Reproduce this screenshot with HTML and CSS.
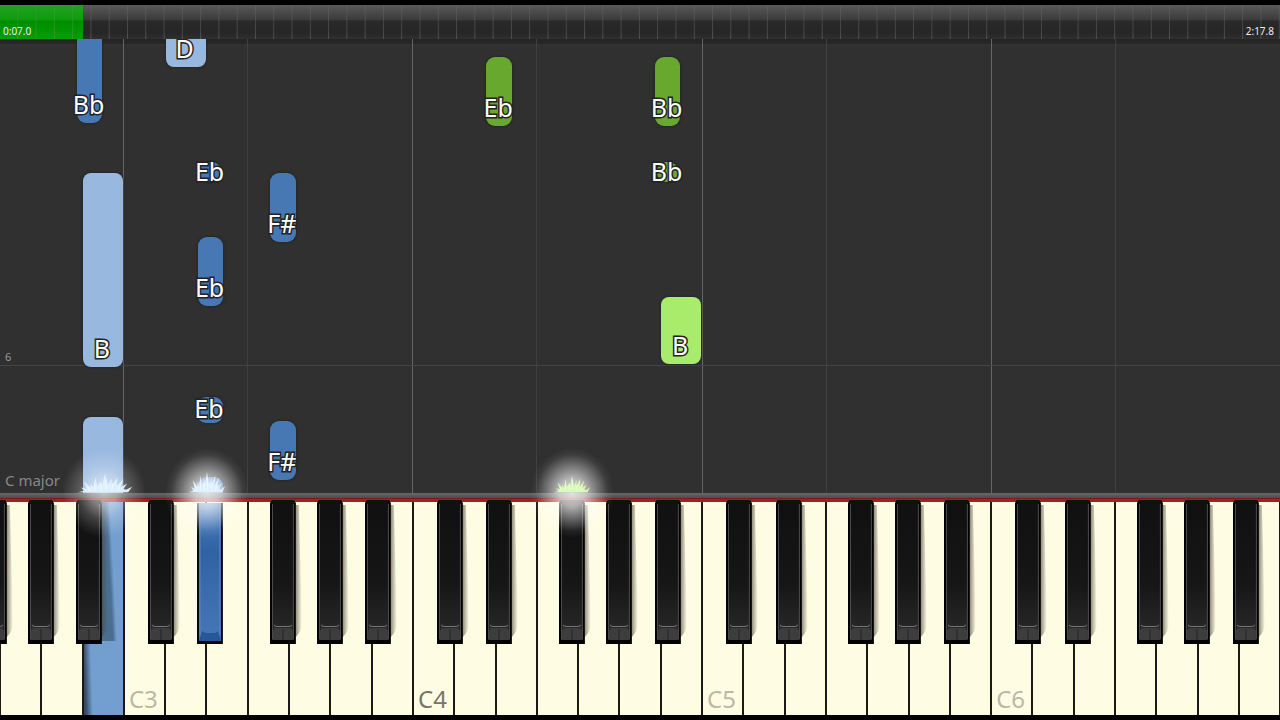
FILE: index.html
```
<!DOCTYPE html>
<html lang="en">
<head>
<meta charset="utf-8">
<meta name="viewport" content="width=device-width, initial-scale=1">
<title>Piano roll</title>
<link rel="stylesheet" href="styles.css">
</head>
<body>
<svg class="defs" aria-hidden="true">
  <defs>
    <linearGradient id="ebony" x1="0" y1="0" x2="0" y2="1"><stop offset="0" stop-color="#101010"/><stop offset=".6" stop-color="#161616"/><stop offset="1" stop-color="#2b2b2b"/></linearGradient>
    <linearGradient id="azure" x1="0" y1="0" x2="0" y2="1"><stop offset="0" stop-color="#4f80bd"/><stop offset=".35" stop-color="#3062a4"/><stop offset="1" stop-color="#4877b8"/></linearGradient>
    <linearGradient id="shade" x1="0" y1="0" x2="1" y2="0"><stop offset="0" stop-color="#4a473d" stop-opacity=".6"/><stop offset="1" stop-color="#4a473d" stop-opacity="0"/></linearGradient>
    <symbol id="black-key" viewBox="0 0 34 145" preserveAspectRatio="none">
      <path d="M26 6L29 6L32 124Q32 132 26 138Z" fill="url(#shade)"/>
      <path d="M0 4L2 1H24L26 4V145H0Z" fill="#000"/>
      <path d="M2 1H24V141H2Z" fill="url(#ebony)"/>
      <path d="M2.500 5V140M23.500 5V140" stroke="#4c4c4c" fill="none"/>
      <path d="M4 126L6 129H20L22 126V141H4Z" fill="#303030"/>
      <path d="M3 141V132Q4 129 8 129H18Q22 129 23 132V141Z" fill="#3d3d3d"/>
      <path d="M4 126Q6 128 8 127.500H18Q20 128 22 126" stroke="#777" fill="none"/>
      <path d="M13 130V141" stroke="#242424"/>
    </symbol>
    <symbol id="blue-key" viewBox="0 0 34 145" preserveAspectRatio="none">
      <path d="M0 4H26V145H0Z" fill="#050608"/>
      <path d="M2 4H24V142H2Z" fill="url(#azure)"/>
      <path d="M3 5V136M23 5V136" stroke="#5d8ac4" fill="none"/>
      <path d="M2 142L5 132Q7 134 10 134H17Q20 134 21 132L24 142Z" fill="#285798"/>
    </symbol>
    <symbol id="spark" viewBox="0 0 56 24" preserveAspectRatio="none">
      <path d="M0 23L7 21L3 17L9 19L6 9L13 17L13 11L16 17L18 4L20 15L24 9L25 14L28 0L31 14L35 6L35 14L41 4L40 15L47 6L44 17L51 12L47 19L50 20L56 16L52 23Z" fill="currentColor"/>
      <path d="M12 22L10 16M18 21L17 12M24 21V13M29 20V7M35 21L36 12M41 21L44 14" stroke="#fff" opacity=".7"/>
    </symbol>
  </defs>
</svg>
<main class="player">
  <div class="timeline" role="progressbar" aria-valuemin="0" aria-valuemax="138" aria-valuenow="7" aria-label="Song position">
    <div class="played" style="width:6.5%"></div>
    <span class="time">0:07.0</span>
    <span class="time">2:17.8</span>
  </div>

  <section class="roll">
    <div class="lanes"><i class="lane first"></i><i class="lane octave"></i><i class="lane four"></i><i class="lane octave"></i><i class="lane four"></i><i class="lane octave"></i><i class="lane four"></i><i class="lane octave"></i><i class="lane four"></i></div>
    <div class="measure"><span class="measure-number">6</span></div>
    <span class="signature">C major</span>

    <div class="note sharp left-hand" style="left:6%;bottom:370px;height:100px"><span>Bb</span></div>
    <div class="note natural left-hand" style="left:12.95%;bottom:426px;height:60px"><span>D</span></div>
    <div class="note sharp right-hand" style="left:38%;bottom:367px;height:69px"><span>Eb</span></div>
    <div class="note sharp right-hand" style="left:51.15%;bottom:367px;height:69px"><span>Bb</span></div>
    <div class="note sharp left-hand short" style="left:15.4%;bottom:311px;height:20px"><span>Eb</span></div>
    <div class="note sharp right-hand short" style="left:51.1%;bottom:311px;height:20px"><span>Bb</span></div>
    <div class="note natural left-hand" style="left:6.48%;bottom:126px;height:194px"><span>B</span></div>
    <div class="note sharp left-hand" style="left:21.1%;bottom:251px;height:69px"><span>F#</span></div>
    <div class="note sharp left-hand" style="left:15.45%;bottom:187px;height:69px"><span>Eb</span></div>
    <div class="note natural right-hand" style="left:51.65%;bottom:129px;height:67px"><span>B</span></div>
    <div class="note sharp left-hand brief" style="left:15.4%;bottom:70px;height:26px"><span>Eb</span></div>
    <div class="note sharp left-hand" style="left:21.1%;bottom:13px;height:59px"><span>F#</span></div>
    <div class="note natural left-hand" style="left:6.48%;bottom:-10px;height:86px"></div>
    <div class="note sharp left-hand" style="left:15.45%;bottom:-10px;height:26px"></div>
  </section>

  <div class="rail">
    <div class="strike wide blue" style="left:8.1%"><svg><use href="#spark"/></svg></div>
    <div class="strike blue" style="left:16.2%"><svg><use href="#spark"/></svg></div>
    <div class="strike green" style="left:44.7%"><svg><use href="#spark"/></svg></div>
  </div>

  <ul class="keyboard">
    <li><button class="white" aria-label="G2"></button><button class="black f before" aria-label="F#2"><svg><use href="#black-key"/></svg></button><button class="black g" aria-label="G#2"><svg><use href="#black-key"/></svg></button></li>
    <li><button class="white" aria-label="A2"></button><button class="black a" aria-label="A#2"><svg><use href="#black-key"/></svg></button></li>
    <li><button class="white pressed" aria-label="B2"></button></li>

    <li><button class="white">C3</button><button class="black c" aria-label="C#3"><svg><use href="#black-key"/></svg></button></li>
    <li><button class="white" aria-label="D3"></button><button class="black d" aria-label="D#3"><svg><use href="#blue-key"/></svg></button></li>
    <li><button class="white" aria-label="E3"></button></li>
    <li><button class="white" aria-label="F3"></button><button class="black f" aria-label="F#3"><svg><use href="#black-key"/></svg></button></li>
    <li><button class="white" aria-label="G3"></button><button class="black g" aria-label="G#3"><svg><use href="#black-key"/></svg></button></li>
    <li><button class="white" aria-label="A3"></button><button class="black a" aria-label="A#3"><svg><use href="#black-key"/></svg></button></li>
    <li><button class="white" aria-label="B3"></button></li>

    <li><button class="white middle">C4</button><button class="black c" aria-label="C#4"><svg><use href="#black-key"/></svg></button></li>
    <li><button class="white" aria-label="D4"></button><button class="black d" aria-label="D#4"><svg><use href="#black-key"/></svg></button></li>
    <li><button class="white" aria-label="E4"></button></li>
    <li><button class="white" aria-label="F4"></button><button class="black f" aria-label="F#4"><svg><use href="#black-key"/></svg></button></li>
    <li><button class="white" aria-label="G4"></button><button class="black g" aria-label="G#4"><svg><use href="#black-key"/></svg></button></li>
    <li><button class="white" aria-label="A4"></button><button class="black a" aria-label="A#4"><svg><use href="#black-key"/></svg></button></li>
    <li><button class="white" aria-label="B4"></button></li>

    <li><button class="white">C5</button><button class="black c" aria-label="C#5"><svg><use href="#black-key"/></svg></button></li>
    <li><button class="white" aria-label="D5"></button><button class="black d" aria-label="D#5"><svg><use href="#black-key"/></svg></button></li>
    <li><button class="white" aria-label="E5"></button></li>
    <li><button class="white" aria-label="F5"></button><button class="black f" aria-label="F#5"><svg><use href="#black-key"/></svg></button></li>
    <li><button class="white" aria-label="G5"></button><button class="black g" aria-label="G#5"><svg><use href="#black-key"/></svg></button></li>
    <li><button class="white" aria-label="A5"></button><button class="black a" aria-label="A#5"><svg><use href="#black-key"/></svg></button></li>
    <li><button class="white" aria-label="B5"></button></li>

    <li><button class="white">C6</button><button class="black c" aria-label="C#6"><svg><use href="#black-key"/></svg></button></li>
    <li><button class="white" aria-label="D6"></button><button class="black d" aria-label="D#6"><svg><use href="#black-key"/></svg></button></li>
    <li><button class="white" aria-label="E6"></button></li>
    <li><button class="white" aria-label="F6"></button><button class="black f" aria-label="F#6"><svg><use href="#black-key"/></svg></button></li>
    <li><button class="white" aria-label="G6"></button><button class="black g" aria-label="G#6"><svg><use href="#black-key"/></svg></button></li>
    <li><button class="white" aria-label="A6"></button><button class="black a" aria-label="A#6"><svg><use href="#black-key"/></svg></button></li>
    <li><button class="white" aria-label="B6"></button></li>
  </ul>
</main>
</body>
</html>
```
FILE: styles.css
```
* { box-sizing: border-box; }
body {
  margin: 0;
  background: #000;
  font-family: "Noto Sans", "Open Sans", sans-serif;
}
.defs { position: absolute; width: 0; height: 0; }
.player {
  display: flex;
  flex-direction: column;
  min-height: 100vh;
  padding: 5px 0;
  overflow: hidden;
}

/* Song position bar */
.timeline {
  position: relative;
  display: flex;
  justify-content: space-between;
  align-items: flex-end;
  flex: 0 0 34px;
  padding: 0 6px 0 3px;
  background: linear-gradient(#5a5a5a, #3a3a3a 15px, #292929 16px, #262626 28px, #303030);
}
.timeline::after {
  content: "";
  position: absolute;
  inset: 0;
  background: linear-gradient(to left, #8888 1px, transparent 1px);
  background-size: calc(100% / 70) 100%;
  -webkit-mask: linear-gradient(#0006, #000);
  mask: linear-gradient(#0006, #000);
  opacity: 0.8;
}
.played {
  position: absolute;
  inset: 0 auto 0 0;
  background: linear-gradient(#22a222, #0c9c0c 15px, #008c00 16px, #00a000);
}
.time {
  position: relative;
  z-index: 1;
  color: #eee;
  font-size: 10px;
  line-height: 15px;
}

/* Falling notes */
.roll {
  position: relative;
  flex: 1 0 454px;
  overflow: hidden;
  background: linear-gradient(#242424, #282828 5px, #353535 5px, #303030 7px);
}
.lanes { position: absolute; inset: 0; display: flex; }
.lane { flex: 3 1 0; border-left: 1px solid #404040; }
.lane.first { border: 0; }
.lane.octave { border-color: #666; }
.lane.four { flex-grow: 4; }
.measure {
  position: absolute;
  inset: auto 0 127px;
  padding-left: 5px;
  border-bottom: 1px solid #444;
  color: #999;
  font-size: 11px;
  line-height: 17px;
}
.measure-number { display: block; }
.signature {
  position: absolute;
  left: 5px;
  bottom: 3px;
  color: #888;
  font-size: 15px;
  line-height: 20px;
}
.note {
  position: absolute;
  display: flex;
  justify-content: center;
  align-items: flex-end;
  padding-bottom: 4px;
  border-radius: 8px;
  box-shadow: 0 0 2px 1px #2229;
}
.natural { width: calc(100% / 32); padding-right: 2px; }
.sharp { width: 2%; padding-right: 2px; border-radius: 9px; }
.short { width: 21px; margin-left: 3px; }
.short, .brief { padding-bottom: 0; }
.short span { margin-bottom: -4px; }
.natural.left-hand { background: #98b8e0; }
.sharp.left-hand { background: #4878b4; }
.natural.right-hand { background: #a9ec6c; }
.sharp.right-hand { background: #68a82e; }
.note span {
  color: #fff;
  font-size: 25px;
  line-height: 29px;
  -webkit-text-stroke: 3px #222;
  paint-order: stroke fill;
}

/* Felt strip and key strikes */
.rail {
  position: relative;
  flex: 0 0 9px;
  background: linear-gradient(#686868, #4c4c4c 5px, #591818 5px, #9c2422 6px, #a02220);
}
.strike {
  position: absolute;
  z-index: 5;
  top: -45px;
  width: 84px;
  height: 90px;
  margin-left: -42px;
  background: radial-gradient(closest-side, #fffc, #fffa 30%, #fff5 60%, #fff1 85%, transparent);
  pointer-events: none;
}
.strike svg {
  position: absolute;
  left: 24px;
  bottom: 45px;
  width: 36px;
  height: 21px;
}
.strike.wide {
  background: radial-gradient(closest-side, #fff9, #fff7 30%, #fff3 60%, #fff1 85%, transparent);
}
.strike.wide svg { left: 16px; width: 54px; height: 19px; }
.blue { color: #def0ff; }
.green { color: #d8fab8; }
.strike.green svg { height: 17px; }

/* Keyboard */
.keyboard {
  display: flex;
  flex: 0 0 213px;
  margin: 0;
  padding: 0;
  list-style: none;
  background: #fffce4;
}
.keyboard li { position: relative; display: flex; flex: 1 1 0; min-width: 0; }
.white {
  flex: 1;
  display: flex;
  align-items: flex-end;
  min-width: 0;
  padding: 0 0 0 4px;
  border: solid #1b1a16;
  border-width: 0 1px;
  background: #fffce4;
  color: #bbb8a4;
  font-family: inherit;
  font-size: 24px;
  line-height: 32px;
}
.middle { color: #77756a; }
.pressed {
  background:
    linear-gradient(88deg, #354a62 2px, #354a6200 9px) 0 100% / 12px 74px no-repeat,
    linear-gradient(87deg, #4b6d90 29px, #4b6d9000 33px) 0 0 / 36px 139px no-repeat,
    #739fd0;
}
.black {
  position: absolute;
  z-index: 2;
  top: -3px;
  width: 82%;
  height: 145px;
  padding: 0;
  border: 0;
  background: none;
}
.black svg { display: block; width: 100%; height: 100%; }
.black.c { left: 59%; }
.black.d { left: 78%; }
.black.f { left: 53%; }
.black.g { left: 67%; }
.black.a { left: 85%; }
.black.before { left: -47%; }
```
